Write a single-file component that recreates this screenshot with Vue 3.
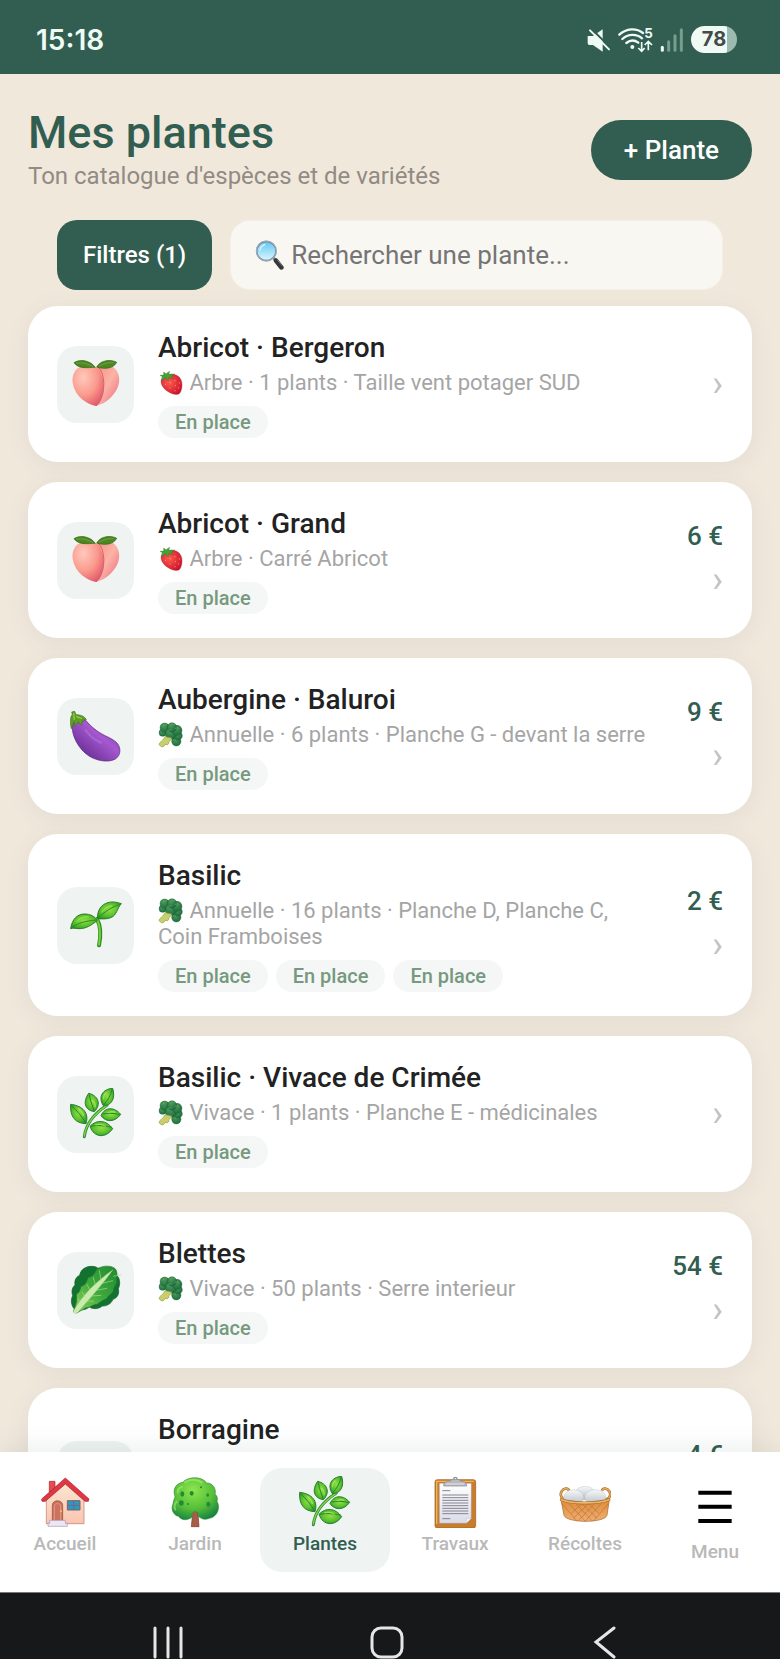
<script setup>
import { ref } from 'vue'

const search = ref('')

const plants = [
  { name: 'Abricot · Bergeron', icon: 'peach', kind: 'strawberry', info: 'Arbre · 1 plants · Taille vent potager SUD', tags: 1 },
  { name: 'Abricot · Grand', icon: 'peach', kind: 'strawberry', info: 'Arbre · Carré Abricot', tags: 1, price: '6 €' },
  { name: 'Aubergine · Baluroi', icon: 'eggplant', kind: 'broccoli', info: 'Annuelle · 6 plants · Planche G - devant la serre', tags: 1, price: '9 €' },
  { name: 'Basilic', icon: 'seedling', kind: 'broccoli', info: 'Annuelle · 16 plants · Planche D, Planche C, Coin Framboises', tags: 3, price: '2 €' },
  { name: 'Basilic · Vivace de Crimée', icon: 'herb', kind: 'broccoli', info: 'Vivace · 1 plants · Planche E - médicinales', tags: 1 },
  { name: 'Blettes', icon: 'lettuce', kind: 'broccoli', info: 'Vivace · 50 plants · Serre interieur', tags: 1, price: '54 €' },
  { name: 'Borragine', icon: 'herb', kind: 'broccoli', info: 'Annuelle · 4 plants · Planche D, Planche C, Coin Framboises', tags: 2, price: '4 €' }
]

const tabs = [
  { label: 'Accueil', icon: 'house' },
  { label: 'Jardin', icon: 'tree' },
  { label: 'Plantes', icon: 'herb', active: true },
  { label: 'Travaux', icon: 'clipboard' },
  { label: 'Récoltes', icon: 'basket' },
  { label: 'Menu', icon: 'menu' }
]
</script>

<template>
  <div class="screen">
    <svg class="sprite" aria-hidden="true">
      <defs>
        <radialGradient id="g-peach" cx="35%" cy="30%" r="80%">
          <stop offset="0" stop-color="#ffc9bd" /><stop offset=".55" stop-color="#fb9a8c" /><stop offset="1" stop-color="#e0566a" />
        </radialGradient>
        <linearGradient id="g-peach2" x1="0" y1="0" x2="1" y2="1">
          <stop offset="0" stop-color="#f78d86" /><stop offset=".5" stop-color="#fcb3a6" /><stop offset="1" stop-color="#e8667a" />
        </linearGradient>
        <linearGradient id="g-egg" x1="1" y1="0" x2="0" y2="1">
          <stop offset="0" stop-color="#7c3aa8" /><stop offset=".4" stop-color="#a558cf" /><stop offset="1" stop-color="#4f1c7c" />
        </linearGradient>
        <radialGradient id="g-leaf" cx="50%" cy="45%" r="65%">
          <stop offset="0" stop-color="#8fe045" /><stop offset=".55" stop-color="#5cc02f" /><stop offset="1" stop-color="#239327" />
        </radialGradient>
        <radialGradient id="g-tree" cx="45%" cy="30%" r="75%">
          <stop offset="0" stop-color="#8de64e" /><stop offset=".6" stop-color="#55bd38" /><stop offset="1" stop-color="#148044" />
        </radialGradient>
        <linearGradient id="g-lettuce" x1="0" y1="1" x2="1" y2="0">
          <stop offset="0" stop-color="#8fd35e" /><stop offset=".5" stop-color="#3fa83c" /><stop offset="1" stop-color="#1f8a34" />
        </linearGradient>
        <radialGradient id="g-berry" cx="40%" cy="40%" r="70%">
          <stop offset="0" stop-color="#ff5a4e" /><stop offset="1" stop-color="#c9102c" />
        </radialGradient>
        <radialGradient id="g-broc" cx="40%" cy="30%" r="75%">
          <stop offset="0" stop-color="#4c9a58" /><stop offset="1" stop-color="#1b6b40" />
        </radialGradient>
        <linearGradient id="g-lens" x1="0" y1="0" x2="0" y2="1">
          <stop offset="0" stop-color="#63c5f1" /><stop offset=".6" stop-color="#a9e4fa" /><stop offset="1" stop-color="#dcf6ff" />
        </linearGradient>
        <linearGradient id="g-basket" x1="0" y1="0" x2="0" y2="1">
          <stop offset="0" stop-color="#dd8b3c" /><stop offset="1" stop-color="#f0ae70" />
        </linearGradient>
        <linearGradient id="g-egg-white" x1="0" y1="0" x2="0" y2="1">
          <stop offset="0" stop-color="#f7f9fa" /><stop offset="1" stop-color="#b4bec6" />
        </linearGradient>
        <linearGradient id="g-paper" x1="0" y1="0" x2="0" y2="1">
          <stop offset="0" stop-color="#ffffff" /><stop offset="1" stop-color="#d9dbe8" />
        </linearGradient>
        <linearGradient id="g-wall" x1="0" y1="0" x2="0" y2="1">
          <stop offset="0" stop-color="#fbe6cf" /><stop offset="1" stop-color="#fac5b0" />
        </linearGradient>
      </defs>

      <symbol id="peach" viewBox="90 102 156 156">
        <path fill="url(#g-peach2)" d="M165 133c20-17 50-12 63 4 16 22 11 50-5 71-14 19-33 34-58 38z" />
        <path fill="url(#g-peach)" d="M168 131c-18-12-48-8-61 8-16 22-10 46 2 67 13 20 38 37 61 40 28-30 30-85-2-115z" />
        <path fill="none" stroke="#d9606a" stroke-width="3" d="M174 128c22 22 24 76 2 110" />
        <path fill="#4d8722" stroke="#2f6214" stroke-width="2" d="M102 116c16-11 47-9 64 14-20 0-49 7-64-14z" />
        <path fill="#4d8722" stroke="#2f6214" stroke-width="2" d="M170 129c12-21 42-24 60-14-10 20-38 21-60 14z" />
        <path fill="none" stroke="#80ad3f" stroke-width="2" d="M109 117c17-2 34 2 50 11m19-2c13-8 28-11 43-10" />
      </symbol>

      <symbol id="eggplant" viewBox="90 629 156 156">
        <path fill="url(#g-egg)" stroke="#54247c" stroke-width="2" d="M97 668c-4 28 10 65 39 91 28 24 70 29 90 17 18-11 18-37 2-51-24-20-50-18-91-65z" />
        <path fill="none" stroke="#c78be6" stroke-width="7" stroke-linecap="round" opacity=".35" d="M137 690c14 19 29 30 46 37" />
        <path fill="#5f9c28" stroke="#3e7619" stroke-width="2" d="M95 635l9-2 4 10c14 0 26 5 31 15l-11 2-3 14-11-9-9 13-3-14-8 21c-4-16-4-34 3-43z" />
        <path fill="none" stroke="#93cb45" stroke-width="4" stroke-linecap="round" d="M101 639l2 18m7-8l14 5" />
      </symbol>

      <symbol id="seedling" viewBox="89 118 156 156">
        <path fill="none" stroke="#2a8f26" stroke-width="12" stroke-linecap="round" d="M170 178c12 22 12 50 6 79" />
        <path fill="none" stroke="#79cf3b" stroke-width="6" stroke-linecap="round" d="M170 178c11 24 11 50 6 77" />
        <path fill="url(#g-leaf)" stroke="#2a7e20" stroke-width="3" d="M91 207c4-29 21-44 41-44 18 0 31 7 39 19-19 16-34 25-55 25-11 0-17-3-25 0z" />
        <path fill="url(#g-leaf)" stroke="#2a7e20" stroke-width="3" d="M171 177c0-26 12-43 32-48 15-5 29 0 40 3-13 13-13 35-32 42-12 5-26 4-40 3z" />
        <path fill="none" stroke="#2f8d21" stroke-width="3" d="M94 204c18-15 44-20 74-23m4-5c18-18 43-34 68-43" />
        <path fill="none" stroke="#b4ed65" stroke-width="3" opacity=".7" d="M109 186c10-12 23-16 36-14m39-14c7-12 18-19 31-20" />
      </symbol>

      <symbol id="herb" viewBox="89 686 156 156">
        <path fill="none" stroke="#278c32" stroke-width="9" stroke-linecap="round" d="M132 832c4-33 25-66 68-94" />
        <path fill="none" stroke="#83d44b" stroke-width="4" stroke-linecap="round" d="M132 830c4-31 26-64 68-92" />
        <g fill="url(#g-leaf)" stroke="#26802a" stroke-width="3">
          <path d="M137 793c-31-1-49-20-46-58 26 3 58 18 46 58z" />
          <path d="M162 757c-31-5-34-31-17-55 27 6 40 32 17 55z" />
          <path d="M189 739c-17-26-2-50 28-52 9 30-3 52-28 52z" />
          <path d="M182 769c12-28 41-26 59-4-16 23-43 26-59 4z" />
          <path d="M149 801c20-21 48-20 68 7-20 29-56 29-68-7z" />
        </g>
        <path fill="none" stroke="#25862a" stroke-width="3" d="M94 740c17 14 31 33 42 50m11-84c3 18 9 34 14 48m54-63c-4 18-14 34-25 45m48 30c-18-6-36-4-51-2m27 40c-20-5-44-8-62-3" />
        <path fill="none" stroke="#c0f26d" stroke-width="4" opacity=".6" d="M114 747c8 8 14 14 16 23m26-48c8 9 10 17 8 22m25-24c0-10 4-16 10-20m3 61c8-5 17-5 23-2m-60 38c12-4 22-2 31 4" />
      </symbol>

      <symbol id="lettuce" viewBox="90 193 156 156">
        <path fill="#127331" stroke="#0b5d29" stroke-width="2" d="M101 326c-9-14-8-28-3-38-5-16 0-26 7-32-3-18 7-26 14-29 3-18 18-27 37-27 8 0 15 3 17 5l61 26c6 9 7 24 1 36 4 17-4 28-16 32-6 15-21 21-32 20-14 12-32 8-39 3-18 14-32 7-47 4z" />
        <path fill="url(#g-lettuce)" stroke="#22792e" stroke-width="2" d="M100 335c10-21 11-36 9-51 8-3 12-13 14-24 13-2 17-14 22-27 14-1 19-13 26-25 16-11 42-11 53-2 11 9 6 30 6 37 2 12-12 19-9 29-5 12-16 14-21 25-15 5-21 12-29 17-17 2-22 11-33 10-9 6-18 10-28 16z" />
        <path fill="#c9ecae" stroke="#96cb78" stroke-width="1" d="M99 338c28-52 66-89 120-128-29 40-62 79-101 122-7 11-14 11-19 6z" />
        <path fill="none" stroke="#a9de86" stroke-width="2" d="M183 243l-5-31m-11 45l-8-25m-8 42l-10-20m-6 39l-9-16m60-26l33-8m-51 29l33-6m-49 23l32-2m-47 17l25 1m58-75l24-5M120 309l-5-12" />
      </symbol>

      <symbol id="strawberry" viewBox="477 509 78 78">
        <path fill="url(#g-berry)" stroke="#b10f26" stroke-width="1" d="M486 545c0-14 14-22 29-23 20-2 34 11 34 31 0 14-4 26-12 29-18 3-49-15-51-37z" />
        <path fill="#45a236" stroke="#26711f" stroke-width="1" d="M494 515l7 5 11-7-3 9 18-1-10 6 4 9-11-5-3 10-7-9-13 10 3-13-7-4 11-1z" />
        <path fill="none" stroke="#ffc36b" stroke-width="3" stroke-linecap="round" d="M499 552h0m15-5h0m14-6h0m-15 22h0m16-7h0m12-8h0m-13 23h0m11-8h0" />
      </symbol>

      <symbol id="broccoli" viewBox="357 665 78 78">
        <g fill="url(#g-broc)" stroke="#16562f" stroke-width="1">
          <circle cx="371" cy="697" r="11" /><circle cx="412" cy="723" r="14" />
          <circle cx="417" cy="706" r="13" /><circle cx="377" cy="682" r="14" />
          <circle cx="396" cy="700" r="17" /><circle cx="414" cy="690" r="15" />
          <circle cx="399" cy="681" r="14" />
        </g>
        <path fill="#c7cf6d" stroke="#8f9b3d" stroke-width="2" d="M361 729c7-7 13-12 17-20l20 4c-1 6-6 9-9 12 1 4 0 7-4 8-3 0-5-1-7 0-2 5-6 7-10 6-5-2-9-5-7-10z" />
        <path fill="none" stroke="#78b964" stroke-width="3" stroke-linecap="round" opacity=".6" d="M371 677c3-4 7-5 11-3m13-1c4-3 8-3 12 0m-20 18c3-3 7-4 10-2m12-5c4-2 8-2 10 0" />
      </symbol>

      <symbol id="magnifier" viewBox="762 119 90 90">
        <path stroke="#77797e" stroke-width="8" d="M815 171l10 9" />
        <path stroke="#36363b" stroke-width="14" stroke-linecap="round" d="M825 181l16 20" />
        <path stroke="#77777e" stroke-width="3" stroke-linecap="round" d="M829 179l15 18" />
        <circle cx="796" cy="152" r="29" fill="url(#g-lens)" stroke="#76889a" stroke-width="5" />
        <circle cx="796" cy="152" r="30" fill="none" stroke="#b6c4d1" stroke-width="2" />
        <path fill="none" stroke="#e1f8ff" stroke-width="5" stroke-linecap="round" opacity=".8" d="M777 149c1-8 7-14 14-16" />
      </symbol>

      <symbol id="house" viewBox="117 106 156 156">
        <path fill="#e64c4e" stroke="#a91d2d" stroke-width="2" d="M148 122h17v32h-17z" />
        <path fill="url(#g-wall)" stroke="#bb7565" stroke-width="2" d="M139 176l57-48 56 48v73H139z" />
        <path fill="#e03744" stroke="#a91d2d" stroke-width="2" d="M125 175l71-63 71 63-2 7h-10l-59-52-60 52h-10z" />
        <path fill="#cc7260" stroke="#914638" stroke-width="2" d="M157 240v-46c0-18 31-18 31 0v46z" />
        <path fill="none" stroke="#e29b80" stroke-width="3" d="M163 239v-42c0-11 19-11 19 0v42" />
        <circle cx="183" cy="212" r="3" fill="#ffca3b" />
        <path fill="#299ac8" stroke="#8e5c5f" stroke-width="3" d="M202 180h38v28h-38z" />
        <path fill="none" stroke="#7c6576" stroke-width="3" d="M221 180v28m-19-14h38" />
        <path fill="#eee6f3" stroke="#a196b4" stroke-width="2" d="M149 239h47v9h6v9h-58v-9h5z" />
      </symbol>

      <symbol id="tree" viewBox="507 106 156 156">
        <path fill="#a65e48" stroke="#773629" stroke-width="2" d="M579 207h14l4 51h-23z" />
        <path fill="url(#g-tree)" stroke="#309139" stroke-width="2" d="M549 125c12-17 57-20 71 2 17-1 30 17 25 34 8 4 8 15 6 21 12 21-1 48-23 51-16 6-24 1-33-6v-10l-9-5-10 5v12c-14 12-33 10-40-2-14-2-25-20-17-37 1-12 6-18 6-23-9-22 5-40 24-42z" />
        <path fill="none" stroke="#a9ee6f" stroke-width="6" opacity=".6" stroke-linecap="round" d="M555 125c14-11 37-10 50 0m-72 30c-1-8 5-15 13-17m-16 45c-6 6-8 16-4 24" />
        <g fill="#258a37"><ellipse cx="547" cy="160" rx="6" ry="8" /><ellipse cx="575" cy="158" rx="6" ry="7" /><ellipse cx="544" cy="187" rx="7" ry="8" /><ellipse cx="625" cy="191" rx="6" ry="8" /><ellipse cx="623" cy="163" rx="4" ry="5" /><circle cx="564" cy="190" r="3" /><circle cx="603" cy="140" r="3" /></g>
      </symbol>

      <symbol id="clipboard" viewBox="147 106 156 156">
        <rect x="165" y="117" width="122" height="145" rx="7" fill="#c87d2d" stroke="#9c581b" stroke-width="2" />
        <path fill="none" stroke="#efb65b" stroke-width="4" d="M170 250V122h111" />
        <path fill="url(#g-paper)" stroke="#8f8090" stroke-width="1" d="M178 128h96v105l-15 15h-81z" />
        <path fill="#f4f4fa" stroke="#aaa7b6" stroke-width="1" d="M259 248v-15h15z" />
        <path fill="none" stroke="#858391" stroke-width="3" d="M187 150h24m-24 13h78m-78 8h78m-78 8h78m-78 8h78m-78 8h78m-78 8h78m-78 8h78m-78 8h78m-78 15h24" />
        <circle cx="226" cy="115" r="5" fill="#fff" stroke="#92939a" stroke-width="4" />
        <path fill="#b8bac1" stroke="#85868e" stroke-width="2" d="M191 136c0-12 8-14 19-15l7-5h18l7 5c11 1 18 4 18 15z" />
        <path stroke="#e4e6e9" stroke-width="3" d="M198 130h55" />
      </symbol>

      <symbol id="basket" viewBox="537 106 156 156">
        <path fill="none" stroke="#a86423" stroke-width="8" d="M559 177c-15 0-20-15-14-25 6-10 19-12 22-2m107 27c15 0 20-15 14-25-6-10-19-12-22-2" />
        <path fill="none" stroke="#e8ae5c" stroke-width="4" d="M559 177c-15 0-20-15-14-25 6-10 19-12 22-2m107 27c15 0 20-15 14-25-6-10-19-12-22-2" />
        <g fill="url(#g-egg-white)" stroke="#a3adb5" stroke-width="1">
          <ellipse cx="615" cy="157" rx="29" ry="20" /><ellipse cx="581" cy="170" rx="30" ry="23" /><ellipse cx="646" cy="170" rx="32" ry="23" />
        </g>
        <path fill="url(#g-basket)" stroke="#a86226" stroke-width="2" d="M543 178c34 13 108 13 145 0l-7 46c-8 24-120 24-129 0z" />
        <path fill="none" stroke="#ae682e" stroke-width="2" opacity=".8" d="M547 190l44 51m-26-55l51 56m-30-54l50 52m-31-52l46 45m-27-46l33 31M684 190l-44 51m26-55l-51 56m30-54l-50 52m31-52l-46 45m27-46l-33 31" />
        <path fill="none" stroke="#ad6b2b" stroke-width="9" stroke-linecap="round" d="M544 177c36 13 106 13 143 0" />
        <path fill="none" stroke="#eeb86c" stroke-width="5" stroke-linecap="round" d="M544 177c36 13 106 13 143 0" />
      </symbol>

      <symbol id="menu" viewBox="927 109 156 180">
        <path fill="none" stroke="#000" stroke-width="12" d="M955 159h100m-100 42h100m-100 43h100" />
      </symbol>
    </svg>

    <div class="status">
      <time class="clock">15:18</time>
      <svg class="signals" viewBox="588 76 297 84" aria-label="Son coupé, Wi-Fi, réseau mobile" role="img">
        <g fill="#effaf5">
          <path d="M593 106h16l29-20v67l-29-20h-11q-5 0-5-5z" />
          <path stroke="#315e50" stroke-width="6" d="M602 82l62 62" />
          <path stroke="#effaf5" stroke-width="6" stroke-linecap="round" d="M600 89l57 57" />
        </g>
        <g fill="none" stroke="#effaf5" stroke-width="7" stroke-linecap="round">
          <path d="M688 102c21-20 51-21 71-5M697 115c17-16 43-16 59-2M709 127c11-9 25-9 36-1" />
        </g>
        <circle cx="727" cy="139" r="6" fill="#effaf5" />
        <path fill="none" stroke="#effaf5" stroke-width="5" d="M755 124v27m-10-9l10 10 9-10M775 149v-26m-11 10l11-11 11 11" />
        <text class="five" x="763" y="112">5</text>
        <g stroke-width="9" stroke-linecap="round">
          <path stroke="#effaf5" d="M817 140v9" />
          <path stroke="#769e8f" d="M836 123v26M855 105v44M874 87v62" />
        </g>
      </svg>
      <span class="battery">78</span>
    </div>

    <header class="header">
      <div>
        <h1>Mes plantes</h1>
        <p>Ton catalogue d'espèces et de variétés</p>
      </div>
      <button class="add" type="button">+ Plante</button>
    </header>

    <div class="tools">
      <button class="filter" type="button">Filtres (1)</button>
      <label class="search">
        <svg aria-hidden="true"><use href="#magnifier" /></svg>
        <input v-model="search" type="search" placeholder="Rechercher une plante..." aria-label="Rechercher une plante">
      </label>
    </div>

    <main class="list">
      <a v-for="plant in plants" :key="plant.name" class="card" href="#">
        <span class="tile"><svg aria-hidden="true"><use :href="'#' + plant.icon" /></svg></span>
        <div class="details">
          <h2>{{ plant.name }}</h2>
          <p><svg aria-hidden="true"><use :href="'#' + plant.kind" /></svg> {{ plant.info }}</p>
          <div class="tags"><span v-for="n in plant.tags" :key="n" class="tag">En place</span></div>
        </div>
        <div class="side">
          <span v-if="plant.price" class="price">{{ plant.price }}</span>
          <span class="chevron">›</span>
        </div>
      </a>
    </main>

    <nav class="tabs">
      <a v-for="tab in tabs" :key="tab.label" class="tab" :class="{ active: tab.active, more: tab.icon === 'menu' }" href="#">
        <svg aria-hidden="true"><use :href="'#' + tab.icon" /></svg>
        <span>{{ tab.label }}</span>
      </a>
    </nav>

    <div class="system">
      <button type="button" aria-label="Applications récentes">
        <svg viewBox="0 0 36 36"><path d="M4 3v29M17 3v29M30 3v29" /></svg>
      </button>
      <button type="button" aria-label="Écran d'accueil">
        <svg viewBox="0 0 36 36"><rect x="3" y="3" width="30" height="29" rx="9" /></svg>
      </button>
      <button type="button" aria-label="Retour">
        <svg viewBox="0 0 36 36"><path d="M27 3L9 17l18 15" /></svg>
      </button>
    </div>
  </div>
</template>

<style>
body {
  margin: 0;
  background: #f1e8dc;
}
</style>

<style scoped>
* {
  box-sizing: border-box;
}
.screen {
  display: flex;
  flex-direction: column;
  height: 100vh;
  overflow: hidden;
  background: #f1e8dc;
  font-family: Roboto, "Liberation Sans", sans-serif;
  color: #222;
}
.sprite {
  position: absolute;
  width: 0;
  height: 0;
}
button {
  border: 0;
  font-family: inherit;
  cursor: pointer;
}
h1, h2, p {
  margin: 0;
}
a {
  color: inherit;
  text-decoration: none;
}
.status {
  display: flex;
  flex: none;
  align-items: center;
  height: 74px;
  padding: 5px 43px 0 36px;
  background: #315e50;
  color: #effaf5;
}
.clock {
  flex: 1;
  font: 600 28px/32px Inter, sans-serif;
}
.signals {
  width: 99px;
  height: 28px;
  margin-right: 6px;
}
.five {
  fill: #effaf5;
  font: 700 40px Inter, sans-serif;
}
.battery {
  width: 46px;
  height: 27px;
  border-radius: 14px;
  background: linear-gradient(90deg, #effaf5 78%, #9dbab0 78%);
  color: #454a48;
  font: 700 20px/27px Inter, sans-serif;
  text-align: center;
}
.header {
  display: flex;
  flex: none;
  align-items: center;
  justify-content: space-between;
  padding: 32px 28px 27px;
}
h1 {
  color: #315e50;
  font-size: 45px;
  font-weight: 500;
  line-height: 54px;
}
.header p {
  color: #918b83;
  font-size: 24px;
  line-height: 33px;
}
.add {
  height: 60px;
  padding: 0 33px;
  border-radius: 30px;
  background: #315e50;
  color: #fff;
  font-size: 26px;
  font-weight: 500;
}
.tools {
  display: flex;
  flex: none;
  gap: 18px;
  padding: 0 57px;
}
.filter {
  height: 70px;
  padding: 0 26px;
  border-radius: 20px;
  background: #315e50;
  color: #fff;
  font-size: 24px;
  font-weight: 500;
}
.search {
  display: flex;
  flex: 1;
  align-items: center;
  gap: 6px;
  min-width: 0;
  padding: 0 24px;
  border: 1px solid #f4f0e8;
  border-radius: 20px;
  background: #f9f7f2;
}
.search svg {
  flex: none;
  width: 30px;
  height: 30px;
}
.search input {
  flex: 1;
  min-width: 0;
  padding: 0;
  border: 0;
  outline: 0;
  background: transparent;
  color: #222;
  font: 26px/32px Roboto, sans-serif;
}
.search input::placeholder {
  color: #757575;
}
.list {
  display: flex;
  flex: 1;
  flex-direction: column;
  gap: 20px;
  min-height: 0;
  padding: 16px 28px;
  overflow-y: auto;
  scrollbar-width: none;
}
.card {
  display: flex;
  flex: none;
  align-items: center;
  gap: 24px;
  padding: 24px 29px;
  border-radius: 30px;
  background: #fff;
  box-shadow: 0 4px 24px rgba(49, 94, 80, 0.08);
}
.tile {
  display: flex;
  flex: none;
  align-items: center;
  justify-content: center;
  width: 77px;
  height: 77px;
  border-radius: 20px;
  background: #eff3f2;
}
.tile svg {
  width: 52px;
  height: 52px;
}
.details {
  flex: 1;
  min-width: 0;
}
h2 {
  font-size: 28px;
  font-weight: 500;
  line-height: 36px;
}
.details p {
  margin-top: 4px;
  color: #a5a5a5;
  font-size: 22px;
  line-height: 26px;
}
.details p svg {
  width: 26px;
  height: 26px;
  vertical-align: -6px;
}
.tags {
  display: flex;
  gap: 8px;
  margin-top: 10px;
}
.tag {
  padding: 0 17px;
  border-radius: 16px;
  background: #f4f7f5;
  color: #76997f;
  font-size: 20px;
  font-weight: 500;
  line-height: 32px;
}
.side {
  display: flex;
  flex: none;
  flex-direction: column;
  align-items: flex-end;
  gap: 8px;
  margin-left: 8px;
}
.price {
  color: #315e50;
  font-size: 26px;
  font-weight: 500;
  line-height: 32px;
}
.chevron {
  color: #c2c2c2;
  font-size: 36px;
  line-height: 40px;
}
.tabs {
  position: relative;
  display: flex;
  flex: none;
  padding: 16px 0 20px;
  background: #fff;
  box-shadow: 0 -4px 24px rgba(49, 94, 80, 0.1);
}
.tab {
  display: flex;
  flex: 1;
  flex-direction: column;
  align-items: center;
  gap: 4px;
  height: 104px;
  padding-top: 8px;
  border-radius: 22px;
  color: #b9b9b9;
  font-size: 19px;
  font-weight: 500;
  line-height: 24px;
}
.tab svg {
  width: 52px;
  height: 52px;
}
.tab.more svg {
  height: 60px;
}
.tab.active {
  background: #eff3f2;
  color: #315e50;
}
.system {
  position: relative;
  display: flex;
  flex: none;
  justify-content: space-around;
  height: 67px;
  padding: 32px 66px 0 60px;
  border-top: 1px solid #77787a;
  background: #17181a;
}
.system button {
  height: 36px;
  padding: 0;
  background: none;
}
.system svg {
  display: block;
  width: 36px;
  height: 36px;
  fill: none;
  stroke: #e6e6e8;
  stroke-width: 3;
  stroke-linecap: round;
}
</style>
